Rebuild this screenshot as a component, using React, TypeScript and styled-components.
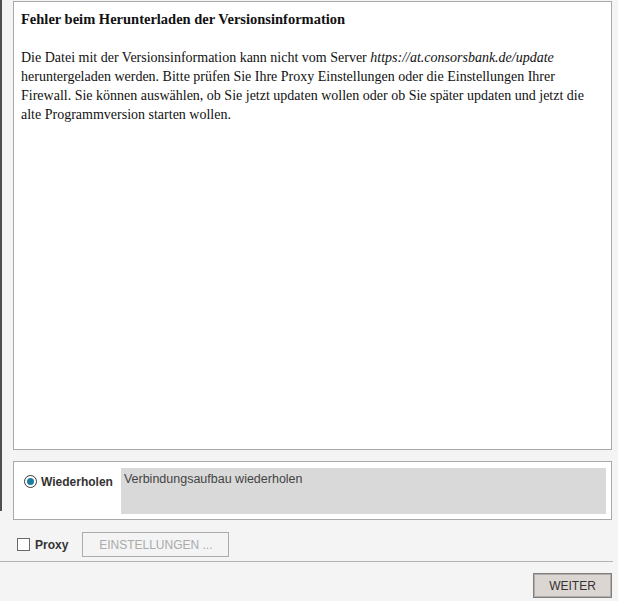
import React from "react";
import styled, { createGlobalStyle } from "styled-components";

const Global = createGlobalStyle`
  html, body { margin: 0; padding: 0; background: #f4f4f4; }
  body { width: 618px; height: 601px; overflow: hidden; }
`;

const Window = styled.div`
  width: 618px;
  height: 601px;
  background: #f4f4f4;
  display: flex;
  flex-direction: column;
  font-family: "Liberation Sans", Arial, sans-serif;
  color: #333;
`;

const Upper = styled.div`
  display: flex;
  align-items: flex-start;
`;

const Edge = styled.div`
  width: 2px;
  height: 511px;
  background: #4f4f4f;
  flex: none;
`;

const Column = styled.div`
  margin-left: 11px;
  padding-top: 1px;
  width: 599px;
  display: flex;
  flex-direction: column;
`;

const MessageBox = styled.div`
  box-sizing: border-box;
  height: 449px;
  border: 1px solid #a9a9a9;
  background: #fff;
  padding: 8px 7px;
  font-family: "Liberation Serif", "Times New Roman", serif;
  font-size: 14px;
  line-height: 19px;
  color: #111;
`;

const Title = styled.div`
  font-weight: bold;
  font-size: 14.5px;
  margin-bottom: 19px;
`;

const Body = styled.div`
  white-space: nowrap;
  em { font-style: italic; }
`;

const OptionBox = styled.div`
  box-sizing: border-box;
  margin-top: 11px;
  height: 59px;
  border: 1px solid #a9a9a9;
  background: #fff;
  display: flex;
  padding: 6px 5px 5px 10px;
`;

const RadioLabel = styled.label`
  display: flex;
  align-items: center;
  gap: 4px;
  height: 15px;
  margin-top: 6px;
  margin-right: 8px;
  font-size: 12px;
  font-weight: bold;
  color: #333;
`;

const RadioDot = styled.span`
  box-sizing: border-box;
  width: 13px;
  height: 13px;
  border-radius: 50%;
  border: 1px solid #3a3a3a;
  background: #fff;
  display: flex;
  align-items: center;
  justify-content: center;
  &::after {
    content: "";
    width: 7px;
    height: 7px;
    border-radius: 50%;
    background: #1b7ca0;
  }
`;

const Field = styled.div`
  flex: 1;
  background: #d9d9d9;
  padding: 4px 3px;
  font-size: 12.5px;
  line-height: 15px;
  color: #444;
`;

const ProxyRow = styled.div`
  display: flex;
  align-items: center;
  margin-top: 12px;
  padding-left: 17px;
  height: 25px;
`;

const CheckBox = styled.span`
  box-sizing: border-box;
  width: 13px;
  height: 13px;
  border: 1px solid #6a6a6a;
  background: #fff;
  margin-right: 5px;
`;

const ProxyLabel = styled.span`
  font-size: 12px;
  font-weight: bold;
  color: #333;
  margin-right: 14px;
`;

const GhostButton = styled.div`
  box-sizing: border-box;
  width: 147px;
  height: 25px;
  border: 1px solid #acacac;
  display: flex;
  align-items: center;
  justify-content: center;
  font-size: 12px;
  color: #aaa;
`;

const Separator = styled.div`
  margin-top: 4px;
  width: 613px;
  height: 1px;
  background: #b3b3b3;
`;

const Footer = styled.div`
  display: flex;
  justify-content: flex-end;
  padding: 11px 6px 0 0;
`;

const PrimaryButton = styled.div`
  box-sizing: border-box;
  width: 79px;
  height: 25px;
  border: 1px solid #7e7e7e;
  box-shadow: inset 0 0 0 1px #b2aeab;
  background: #dcd6d2;
  display: flex;
  align-items: center;
  justify-content: center;
  font-size: 12px;
  color: #333;
`;

export default function App() {
  return (
    <>
      <Global />
      <Window>
        <Upper>
          <Edge />
          <Column>
            <MessageBox>
              <Title>Fehler beim Herunterladen der Versionsinformation</Title>
              <Body>
                Die Datei mit der Versionsinformation kann nicht vom Server{" "}
                <em>https://at.consorsbank.de/update</em>
                <br />
                heruntergeladen werden. Bitte prüfen Sie Ihre Proxy Einstellungen oder die Einstellungen Ihrer
                <br />
                Firewall. Sie können auswählen, ob Sie jetzt updaten wollen oder ob Sie später updaten und jetzt die
                <br />
                alte Programmversion starten wollen.
              </Body>
            </MessageBox>
            <OptionBox>
              <RadioLabel>
                <RadioDot />
                Wiederholen
              </RadioLabel>
              <Field>Verbindungsaufbau wiederholen</Field>
            </OptionBox>
          </Column>
        </Upper>
        <ProxyRow>
          <CheckBox />
          <ProxyLabel>Proxy</ProxyLabel>
          <GhostButton>EINSTELLUNGEN ...</GhostButton>
        </ProxyRow>
        <Separator />
        <Footer>
          <PrimaryButton>WEITER</PrimaryButton>
        </Footer>
      </Window>
    </>
  );
}
